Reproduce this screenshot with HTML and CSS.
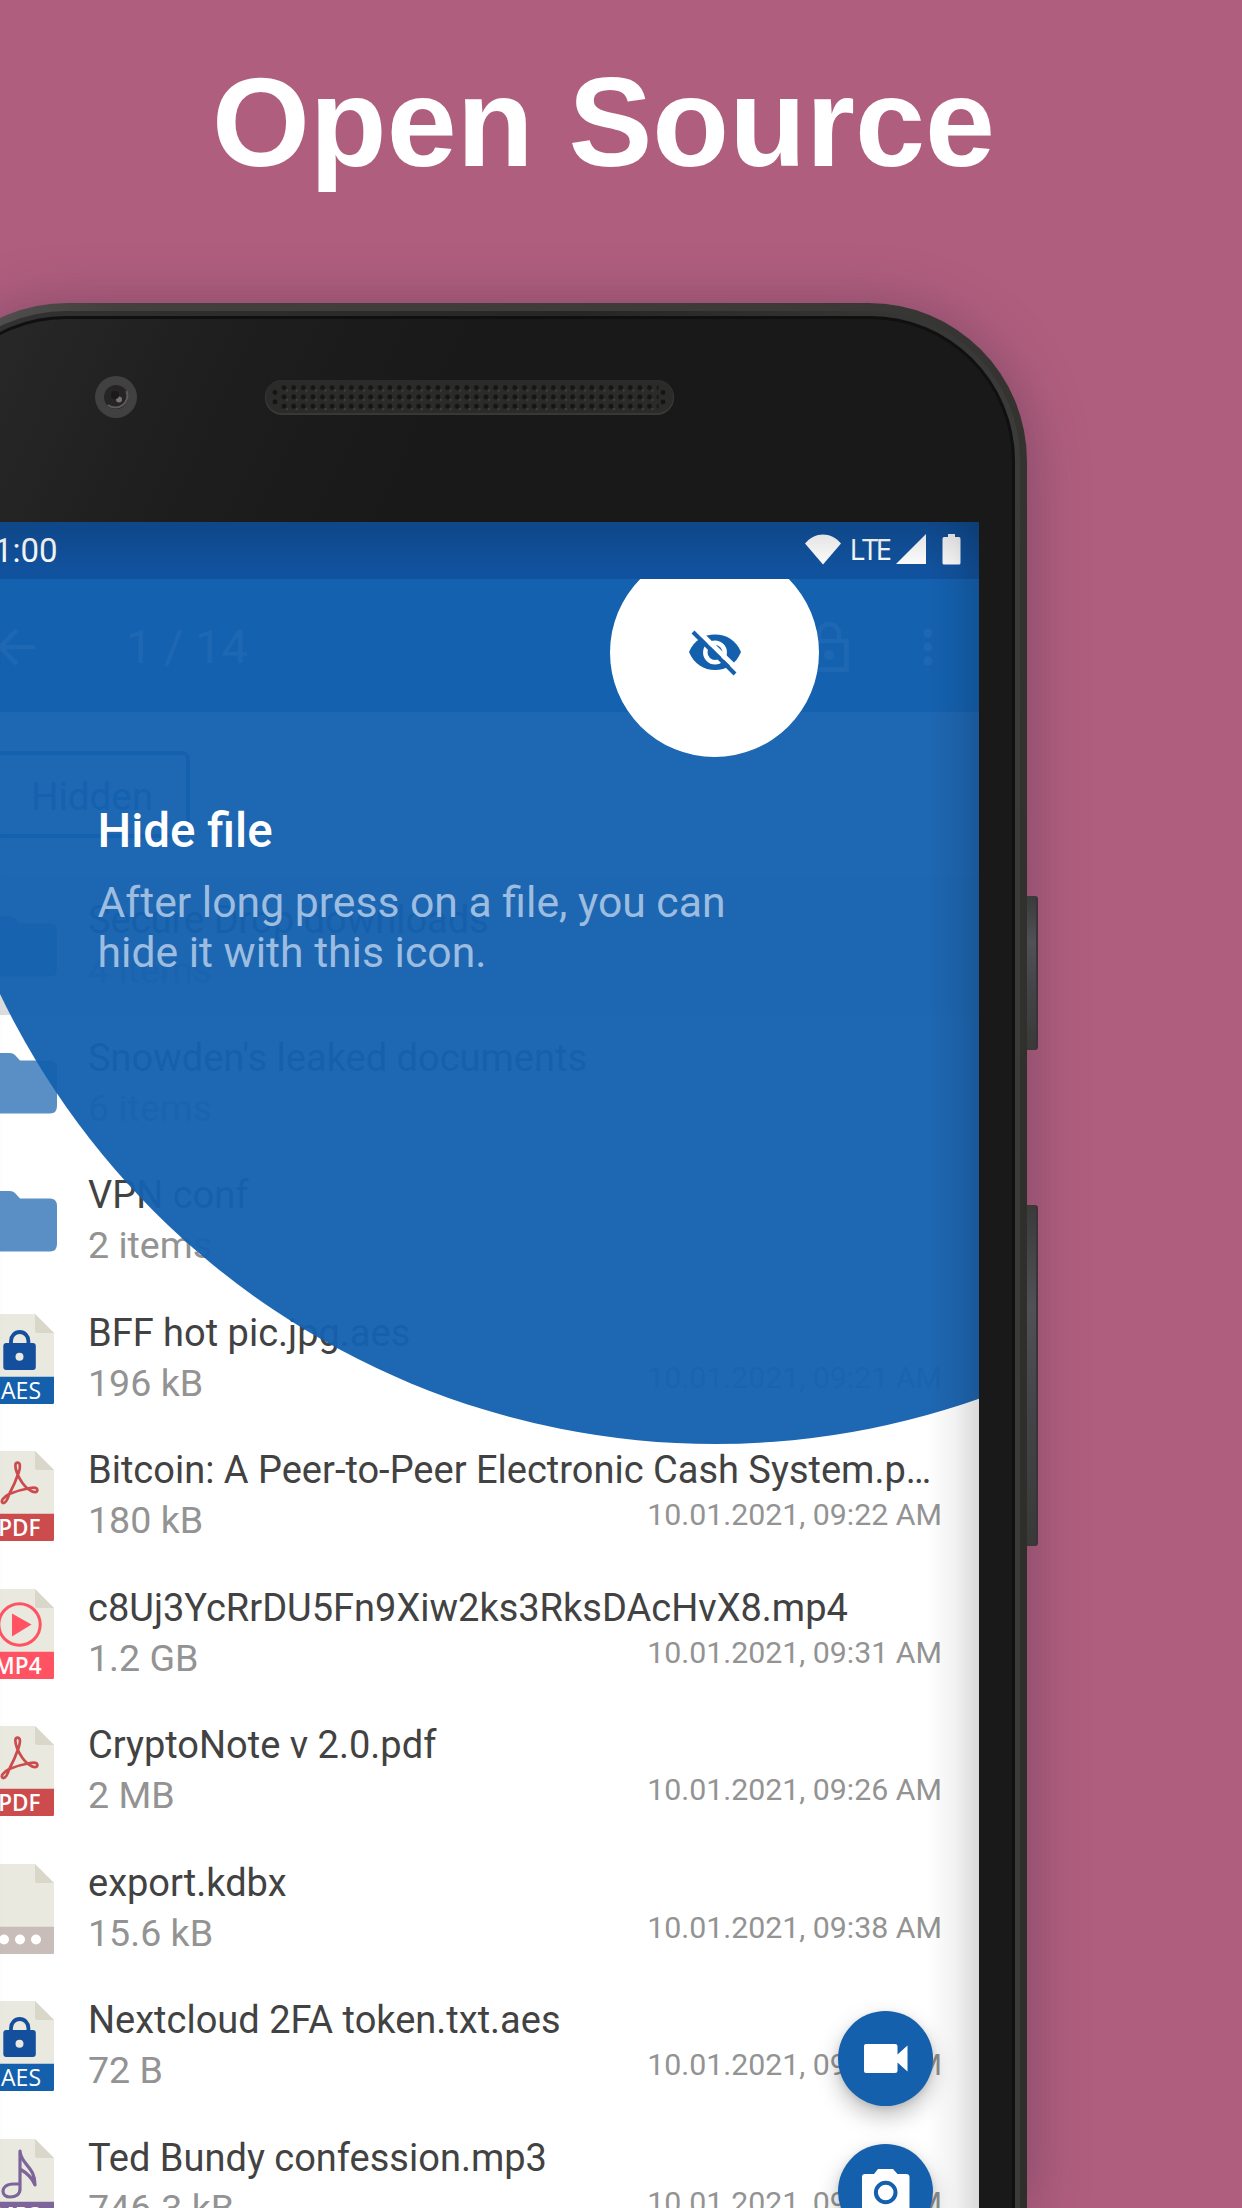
FILE: index.html
```html
<!DOCTYPE html>
<html lang="en">
<head>
<meta charset="utf-8">
<title>Open Source</title>
<link rel="stylesheet" href="styles.css">
</head>
<body>
<svg class="defs" width="0" height="0" aria-hidden="true">
  <symbol id="sheet" viewBox="0 0 69 90">
    <path d="M2 0H50L69 19V90H0V2Q0 0 2 0Z" fill="#e9e9e0"/>
    <path d="M50 0V17Q50 19 52 19H69Z" fill="#d9d7ca"/>
  </symbol>
  <symbol id="folder" viewBox="0 0 75 61">
    <path d="M7 0H28Q31 0 33 2L38 7.500H68Q75 7.500 75 15V53Q75 60.500 68 60.500H7Q0 60.500 0 53V7Q0 0 7 0Z" fill="#5a8fc6"/>
  </symbol>
  <symbol id="aes" viewBox="0 0 69 90">
    <use href="#sheet"/>
    <path d="M26 31V27a8.700 9 0 0 1 17.400 0V31" fill="none" stroke="#134f9c" stroke-width="3.800"/>
    <rect x="18.300" y="29" width="32.500" height="27" rx="3" fill="#134f9c"/>
    <circle cx="34.500" cy="42.700" r="4" fill="#e9e9e0"/>
    <path d="M0 62.700H69V88.500Q69 90 67.500 90H1.500Q0 90 0 88.500Z" fill="#1560ad"/>
    <text x="56" y="85.300" text-anchor="end" class="tag">AES</text>
  </symbol>
  <symbol id="pdf" viewBox="0 0 69 90">
    <use href="#sheet"/>
    <path d="M24.300 43C28 36 31.500 28 33.500 22C36 15 35 11.700 32.500 11.700C30 11.700 29.500 15 32 22C34.500 28 38 34 43.300 38.300C48 42 53 42 52.300 38.500C51.500 35 46 37 43 37.500C37 38.500 30 40.500 24.300 43C18 46 15 51 18 52C20.500 52.500 23 47 24.300 43Z" fill="none" stroke="#cc4b4c" stroke-width="2.700" stroke-linejoin="round"/>
    <path d="M0 62.700H69V88.500Q69 90 67.500 90H1.500Q0 90 0 88.500Z" fill="#cc4b4c"/>
    <text x="55.500" y="85.300" text-anchor="end" class="tag tag-strong">PDF</text>
  </symbol>
  <symbol id="mp4" viewBox="0 0 69 90">
    <use href="#sheet"/>
    <circle cx="34.500" cy="35.500" r="20.700" fill="none" stroke="#ff5364" stroke-width="3"/>
    <path d="M27 24.500L46.500 35.500L27 47.500Z" fill="#ff5364"/>
    <path d="M0 62.700H69V88.500Q69 90 67.500 90H1.500Q0 90 0 88.500Z" fill="#ff5364"/>
    <text x="56.500" y="85.300" text-anchor="end" class="tag tag-strong">MP4</text>
  </symbol>
  <symbol id="other" viewBox="0 0 69 90">
    <use href="#sheet"/>
    <path d="M0 62.700H69V88.500Q69 90 67.500 90H1.500Q0 90 0 88.500Z" fill="#c8bdb8"/>
    <g fill="#fff"><circle cx="19" cy="75.500" r="5"/><circle cx="35" cy="75.500" r="5"/><circle cx="51" cy="75.500" r="5"/></g>
  </symbol>
  <symbol id="mp3" viewBox="0 0 69 90">
    <use href="#sheet"/>
    <path d="M35 51V12C36 26 50 27 50 46C47 38 42 34 35 30M35 45H28C21 45 18 49 18 52C18 56 21 58 25 58C31 58 35 55 35 50" fill="none" stroke="#7d6599" stroke-width="3.200" stroke-linejoin="round"/>
    <path d="M0 62.700H69V90H0Z" fill="#7d6599"/>
    <text x="56.500" y="85.300" text-anchor="end" class="tag tag-strong">MP3</text>
  </symbol>
</svg>

<h1 class="headline">Open Source</h1>

<div class="phone">
  <i class="key key-power"></i>
  <i class="key key-volume"></i>
  <div class="rim"><div class="glass">
    <div class="brow">
      <svg class="lens" viewBox="0 0 42 42"><circle cx="21" cy="21" r="21" fill="#414141"/><circle cx="21" cy="21" r="12" fill="#262424"/><path d="M13 29A12 12 0 0 0 31.500 15" fill="none" stroke="#5e5a5c" stroke-width="2"/><circle cx="24" cy="23.500" r="3" fill="#777173"/><circle cx="20" cy="19" r="4" fill="#1b1a1a"/></svg>
      <svg class="speaker" viewBox="0 0 410 35">
        <defs><pattern id="holes" x="14.500" y="3" width="9.640" height="9.300" patternUnits="userSpaceOnUse"><circle cx="4.600" cy="4.600" r="2.400" fill="#151515"/><circle cx="7.600" cy="7.600" r="1" fill="#444"/></pattern></defs>
        <rect width="410" height="35" rx="17" fill="#383837"/><rect x="1" width="408" height="33" rx="16" fill="#2b2b2a"/>
        <rect x="14.500" y="3" width="380" height="28" fill="url(#holes)"/>
        <g fill="#151515"><circle cx="10" cy="12.500" r="2.400"/><circle cx="10" cy="22" r="2.400"/><circle cx="399" cy="12.500" r="2.400"/><circle cx="399" cy="22" r="2.400"/></g>
      </svg>
    </div>
    <div class="screen">
      <div class="status">
        <span class="clock">1:00</span>
        <div class="signals">
          <svg class="wifi" viewBox="0 0 36 31"><path d="M0 9.500C10 -2.500 26 -2.500 36 9.500L18 30.500Z"/></svg>
          <span class="lte">LTE</span>
          <svg class="cell" viewBox="0 0 30 30"><path d="M30 0V30H0Z"/></svg>
          <svg class="battery" viewBox="0 0 19 31"><path d="M6 0H13V3H17Q18.500 3 18.500 5V29Q18.500 30.500 17 30.500H2Q.5 30.500 .5 29V5Q.5 3 2 3H6Z"/></svg>
        </div>
      </div>
      <div class="app">
        <div class="toolbar">
          <svg class="back" viewBox="0 0 38 38"><path d="M37 19H3M19 2L2 19L19 36" fill="none" stroke="#fff" stroke-width="4.500"/></svg>
          <span class="count">1 / 14</span>
          <svg class="lock" viewBox="0 0 40 52"><path d="M2.500 20H37.500V48.500H2.500ZM10 20V13a10 10 0 0 1 20 0V20" fill="none" stroke="#fff" stroke-width="4.500"/><circle cx="20" cy="34" r="5" fill="#fff"/></svg>
          <svg class="more" viewBox="0 0 10 38"><g fill="#fff"><circle cx="5" cy="5" r="4.500"/><circle cx="5" cy="19" r="4.500"/><circle cx="5" cy="33" r="4.500"/></g></svg>
        </div>
        <div class="filters"><span class="chip">Hidden</span></div>
        <ul class="files">
          <li class="file selected"><svg class="dir"><use href="#folder"/></svg><div class="info"><b>Secure Drop downloads</b><span>4 items</span></div></li>
          <li class="file"><svg class="dir"><use href="#folder"/></svg><div class="info"><b>Snowden's leaked documents</b><span>6 items</span></div></li>
          <li class="file"><svg class="dir"><use href="#folder"/></svg><div class="info"><b>VPN conf</b><span>2 items</span></div></li>
          <li class="file"><svg class="doc"><use href="#aes"/></svg><div class="info"><b>BFF hot pic.jpg.aes</b><span>196 kB</span></div><time>10.01.2021, 09:21 AM</time></li>
          <li class="file"><svg class="doc"><use href="#pdf"/></svg><div class="info"><b>Bitcoin: A Peer-to-Peer Electronic Cash System.p…</b><span>180 kB</span></div><time>10.01.2021, 09:22 AM</time></li>
          <li class="file"><svg class="doc"><use href="#mp4"/></svg><div class="info"><b>c8Uj3YcRrDU5Fn9Xiw2ks3RksDAcHvX8.mp4</b><span>1.2 GB</span></div><time>10.01.2021, 09:31 AM</time></li>
          <li class="file"><svg class="doc"><use href="#pdf"/></svg><div class="info"><b>CryptoNote v 2.0.pdf</b><span>2 MB</span></div><time>10.01.2021, 09:26 AM</time></li>
          <li class="file"><svg class="doc"><use href="#other"/></svg><div class="info"><b>export.kdbx</b><span>15.6 kB</span></div><time>10.01.2021, 09:38 AM</time></li>
          <li class="file"><svg class="doc"><use href="#aes"/></svg><div class="info"><b>Nextcloud 2FA token.txt.aes</b><span>72 B</span></div><time>10.01.2021, 09:27 AM</time></li>
          <li class="file"><svg class="doc"><use href="#mp3"/></svg><div class="info"><b>Ted Bundy confession.mp3</b><span>746.3 kB</span></div><time>10.01.2021, 09:35 AM</time></li>
        </ul>
        <div class="fabs">
          <div class="fab"><svg viewBox="0 0 44 30" width="44" height="30"><path d="M2 0H31Q33.500 0 33.500 2V10.500L43.500 1.500V27.500L33.500 18.500V27Q33.500 29 31 29H2Q0 29 0 27V2Q0 0 2 0Z" fill="#fff"/></svg></div>
          <div class="fab"><svg viewBox="0 0 48 46" width="48" height="46"><path d="M16 0H31L35.500 5H44Q47.500 5 47.500 8V42Q47.500 45 44 45H3Q0 45 0 42V8Q0 5 3 5H12Z" fill="#fff"/><circle cx="23.700" cy="23.500" r="9.800" fill="none" stroke="#1560ad" stroke-width="4"/></svg></div>
        </div>
        <div class="spotlight"></div>
        <div class="target">
          <svg viewBox="0 0 52 46" width="52" height="46"><path d="M0 22C5 10 15 4.500 26 4.500S47 10 52 22C47 34 37 40 26 40S5 34 0 22Z" fill="#1560ad"/><circle cx="26" cy="22.500" r="9.700" fill="#1560ad" stroke="#fff" stroke-width="4.500"/><path d="M6.500 -1.500L50.500 41.500" stroke="#fff" stroke-width="5"/><path d="M4 2L46 44" stroke="#1560ad" stroke-width="4"/></svg>
        </div>
        <div class="hint"><strong>Hide file</strong><p>After long press on a file, you can<br>hide it with this icon.</p></div>
      </div>
      <div class="shade"></div>
    </div>
  </div></div>
</div>
</body>
</html>
```
FILE: styles.css
```css
* { box-sizing: border-box; }
body {
  margin: 0;
  width: 1242px;
  height: 2208px;
  overflow: hidden;
  background: #b05e7e;
  font-family: Roboto, "Liberation Sans", sans-serif;
  display: flex;
  flex-direction: column;
}
svg { display: block; flex: none; overflow: visible; }
.defs { position: absolute; }
.tag { font: 500 23px "Open Sans", "Noto Sans", sans-serif; fill: #fff; }
.tag-strong { font-weight: 600; font-size: 22.500px; }

.headline {
  margin: 0;
  height: 303px;
  flex: none;
  padding: 51px 0 0 212px;
  font: bold 125.800px/144px "Liberation Sans", Arial, sans-serif;
  color: #fff;
  white-space: nowrap;
}

/* Phone body, running off the bottom of the page */
.phone {
  position: relative;
  flex: none;
  width: 1118px;
  height: 1905px;
  margin-left: -91px;
  border-radius: 158px 158px 0 0;
  background: linear-gradient(100deg, #5a5a59 0, #42403e 14%, #3c3a38 60%, #2e2e2b 90%);
  box-shadow: 0 6px 60px rgba(60, 40, 70, .42);
  padding: 8px 7px 0;
}
.rim {
  height: 100%;
  border-radius: 150px 150px 0 0;
  background: linear-gradient(90deg, #333 0, #262626 60%, #3b3b3a 100%);
  padding: 5px 5px 0;
}
.glass {
  height: 100%;
  border-radius: 145px 145px 0 0;
  border: 3px solid #101010;
  border-bottom: 0;
  background: linear-gradient(115deg, #2b2b2b 0, #1e1e1e 16%, #191919 28%);
  display: flex;
  flex-direction: column;
}
.key {
  position: absolute;
  right: -11px;
  width: 11px;
  border-radius: 0 3px 3px 0;
  background: linear-gradient(#3a3a3b, #515055 30%, #444347 60%, #3a3939);
  border-right: 2px solid #3b3437;
}
.key-power { top: 593px; height: 154px; }
.key-volume { top: 902px; height: 341px; }
.brow { height: 203px; flex: none; display: flex; align-items: flex-start; padding-left: 171px; }
.lens { width: 42px; height: 42px; margin-top: 57px; }
.speaker { width: 409px; height: 35px; margin: 61px 0 0 128px; }

/* Screen */
.screen {
  position: relative;
  width: 1022px;
  flex: 1;
  min-height: 0;
  margin-left: 33px;
  overflow: hidden;
  background: #fff;
  display: flex;
  flex-direction: column;
}
.status {
  height: 57px;
  flex: none;
  background: #11529e;
  color: #fff;
  display: flex;
  justify-content: space-between;
  padding-left: 37px;
}
.clock { font-size: 33px; line-height: 57px; }
.signals { display: flex; fill: #fff; padding-right: 18.500px; }
.wifi { width: 36px; height: 31px; margin-top: 12px; }
.lte { font: 29.500px/54px "Open Sans", sans-serif; letter-spacing: -2.800px; margin: 0 6px 0 9px; width: 40px; }
.cell { width: 30px; height: 30px; margin-top: 12px; }
.battery { width: 19px; height: 31px; margin: 12px 0 0 16px; }
.app { position: relative; flex: 1; min-height: 0; overflow: hidden; display: flex; flex-direction: column; }
.toolbar {
  height: 133px;
  flex: none;
  background: #1560ad;
  color: #fff;
  display: flex;
  align-items: center;
  padding: 2px 46px 0 41px;
}
.back { width: 38px; height: 38px; }
.count { font-size: 47px; margin-left: 90px; flex: 1; }
.lock { width: 40px; height: 52px; margin-right: 74px; }
.more { width: 10px; height: 38px; }
.filters { height: 165px; flex: none; padding: 39px 0 0 20px; }
.chip {
  display: block;
  width: 213px;
  height: 87px;
  border: 4px solid #1560ad;
  border-radius: 8px;
  padding-left: 50px;
  font-size: 38.500px;
  line-height: 84px;
  color: #1560ad;
}
.files { list-style: none; margin: 0; padding: 0; }
.file { height: 137.500px; display: flex; padding-right: 37px; }
.selected { background: #dcdcdc; }
.dir { width: 75px; height: 61px; margin: 38.500px 31px 0 25px; }
.doc { width: 69px; height: 90px; margin: 24px 34px 0 28px; }
.info { flex: 1; min-width: 0; display: flex; flex-direction: column; gap: 6.400px; padding-top: 21px; font-size: 37.600px; line-height: 44px; white-space: nowrap; }
.info b { font-size: 38px; font-weight: 400; color: #424242; }
.info span { color: #939393; }
.file time { width: 0; display: flex; justify-content: flex-end; padding-top: 70px; font-size: 30.300px; line-height: 36px; color: #939393; white-space: nowrap; }

/* Layers above the list */
.fabs { position: absolute; left: 881px; top: 1432px; display: flex; flex-direction: column; gap: 38px; }
.fab {
  width: 95px;
  height: 95px;
  border-radius: 50%;
  background: #1560ad;
  box-shadow: 0 10px 22px rgba(0, 0, 0, .25), 0 2px 6px rgba(0, 0, 0, .1);
  display: grid;
  place-items: center;
}
.spotlight {
  position: absolute;
  left: -35.300px;
  top: -721.500px;
  width: 1586px;
  height: 1586px;
  border-radius: 50%;
  background: rgba(21, 97, 175, .96);
}
.target {
  position: absolute;
  left: 653.200px;
  top: -31.500px;
  width: 209px;
  height: 209px;
  border-radius: 50%;
  background: #fff;
  display: grid;
  place-items: center;
}
.target svg { margin: 1px 0 0; }
.hint { position: absolute; left: 140.500px; top: 222px; color: #fff; white-space: nowrap; }
.hint strong { display: block; font-size: 47.500px; line-height: 60px; font-weight: 500; }
.hint p { margin: 16px 0 0; font-size: 42.700px; line-height: 50px; color: #9dbde0; }
.shade {
  position: absolute;
  inset: 0;
  background:
    linear-gradient(270deg, rgba(0, 0, 0, .15), rgba(0, 0, 0, .05) 25px, transparent 52px),
    linear-gradient(90deg, rgba(0, 0, 0, .15), rgba(0, 0, 0, .03) 25px, transparent 48px),
    linear-gradient(rgba(0, 0, 0, .14), transparent 48px);
}
```
